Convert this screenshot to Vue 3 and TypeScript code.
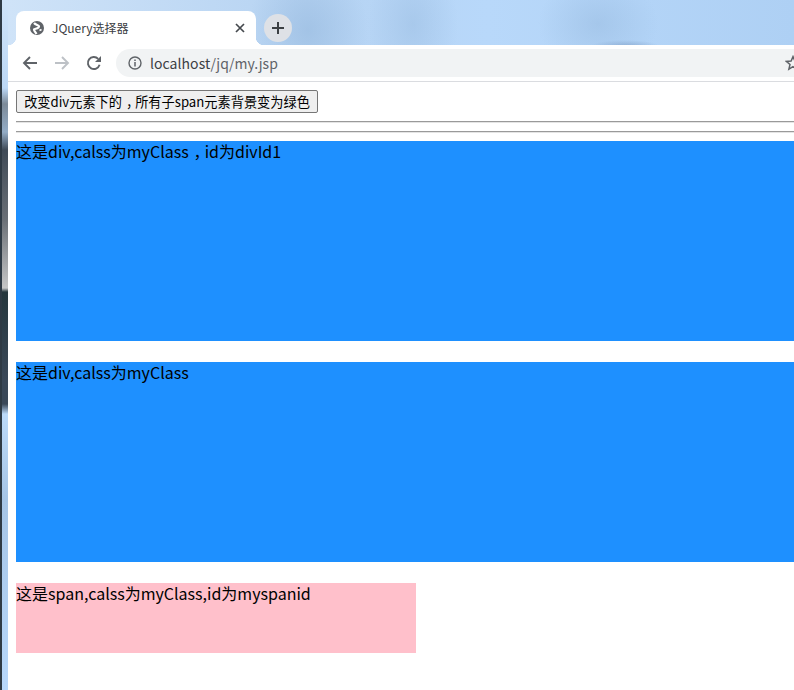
<template>
  <div class="screen">
    <div class="desktop-edge">
      <div class="edge-dark"></div>
      <div class="edge-light"></div>
    </div>
    <div class="browser">
      <div class="tabstrip">
        <div class="tab">
          <svg class="favicon" width="16" height="16" viewBox="0 0 16 16">
            <circle cx="8" cy="8" r="7" fill="#5f6368" />
            <path d="M5 3 C7 5.5 11.5 5 9.5 7.5 C7.5 9.5 3.5 8 5.5 11 C6.5 12.5 7 13 7.5 14" stroke="#fff" stroke-width="2.2" fill="none" />
            <path d="M10.5 10.5 12.5 9.5" stroke="#fff" stroke-width="1.6" fill="none" />
          </svg>
          <span class="tab-title">JQuery选择器</span>
          <svg class="tab-close" width="10" height="10" viewBox="0 0 10 10">
            <path d="M1 1 9 9M9 1 1 9" stroke="#45494e" stroke-width="1.7" fill="none" />
          </svg>
        </div>
        <div class="new-tab">
          <svg width="14" height="14" viewBox="0 0 14 14">
            <path d="M7 1V13M1 7H13" stroke="#3c4043" stroke-width="2" fill="none" />
          </svg>
        </div>
      </div>
      <div class="toolbar">
        <svg class="nav-icon" width="16" height="16" viewBox="0 0 16 16">
          <path d="M15 8H2M8 2 2 8 8 14" stroke="#5f6368" stroke-width="1.9" fill="none" />
        </svg>
        <svg class="nav-icon" width="16" height="16" viewBox="0 0 16 16">
          <path d="M1 8H14M8 2 14 8 8 14" stroke="#bdc1c6" stroke-width="1.9" fill="none" />
        </svg>
        <svg class="nav-icon" width="16" height="16" viewBox="0 0 16 16">
          <path d="M13.6 9.8A6 6 0 1 1 12.2 3.8" stroke="#5f6368" stroke-width="1.9" fill="none" />
          <path d="M15 1V7H9Z" fill="#5f6368" />
        </svg>
        <div class="omnibox">
          <svg class="info" width="14" height="14" viewBox="0 0 14 14">
            <circle cx="7" cy="7" r="6" stroke="#5f6368" stroke-width="1.4" fill="none" />
            <path d="M7 6V10.4M7 3.4V5" stroke="#5f6368" stroke-width="1.5" fill="none" />
          </svg>
          <span class="url"><span class="host">localhost</span>/jq/my.jsp</span>
          <svg class="star" width="16" height="16" viewBox="0 0 16 16">
            <path d="M8 1.6 9.9 6 14.6 6.4 11 9.5 12.1 14.1 8 11.7 3.9 14.1 5 9.5 1.4 6.4 6.1 6Z" stroke="#5f6368" stroke-width="1.5" fill="none" />
          </svg>
        </div>
      </div>
      <main class="page">
        <button class="change-btn" type="button">改变div元素下的<span class="punct">，</span>所有子span元素背景变为绿色</button>
        <hr />
        <hr />
        <div class="my-class">这是div,calss为myClass<span class="punct">，</span>id为divId1</div>
        <div class="my-class">这是div,calss为myClass</div>
        <span class="my-span">这是span,calss为myClass,id为myspanid</span>
      </main>
    </div>
  </div>
</template>

<script setup lang="ts">
</script>

<style>
html,
body {
  margin: 0;
  overflow: hidden;
  background: #fff;
}
</style>

<style scoped>
.screen {
  display: flex;
  width: 794px;
  height: 690px;
  overflow: hidden;
  font-family: "Noto Sans CJK SC", "Liberation Sans", sans-serif;
}

.desktop-edge {
  display: flex;
  flex: none;
  width: 8px;
}

.edge-dark {
  width: 2px;
  background: #2f3a44;
}

.edge-light {
  flex: 1;
  background: linear-gradient(
    #cfe3f8 0,
    #bcd8f6 88px,
    #7c8a98 104px,
    #93acc6 132px,
    #3f4a56 150px,
    #6b7076 220px,
    #c6c6c6 288px,
    #26373d 292px,
    #3a4858 380px,
    #3a4858 404px,
    #bcdaf9 414px,
    #a6c5e6 500px,
    #b8d8fb 690px
  );
}

.browser {
  display: flex;
  flex: 1;
  flex-direction: column;
  min-width: 0;
}

.tabstrip {
  display: flex;
  align-items: flex-end;
  flex: none;
  height: 45px;
  padding-left: 8px;
  background:
    radial-gradient(ellipse 60px 70px at 300px 30px, rgba(150, 185, 222, 0.6), transparent),
    radial-gradient(ellipse 45px 70px at 405px 24px, rgba(150, 185, 222, 0.45), transparent),
    radial-gradient(ellipse 60px 50px at 590px 24px, rgba(150, 185, 222, 0.5), transparent),
    radial-gradient(ellipse 34px 6px at 617px 46px, rgba(120, 150, 190, 0.6), transparent),
    linear-gradient(90deg, #cfe3f8 0, #b6d3f2 300px, #b8d8fa 480px, #aed0f4 786px);
}

.tab {
  position: relative;
  display: flex;
  align-items: center;
  box-sizing: border-box;
  width: 240px;
  height: 34px;
  padding: 0 11px 0 13px;
  border-radius: 8px 8px 0 0;
  background: #fff;
}

.tab::before,
.tab::after {
  content: "";
  position: absolute;
  bottom: 0;
  width: 8px;
  height: 8px;
}

.tab::before {
  left: -8px;
  background: radial-gradient(circle at 0 0, transparent 8px, #fff 8.5px);
}

.tab::after {
  right: -8px;
  background: radial-gradient(circle at 100% 0, transparent 8px, #fff 8.5px);
}

.favicon {
  flex: none;
}

.tab-title {
  flex: 1;
  margin-left: 7px;
  color: #3c4043;
  font-size: 12px;
  line-height: 34px;
}

.new-tab {
  display: flex;
  align-items: center;
  justify-content: center;
  width: 28px;
  height: 28px;
  margin: 0 0 3px 8px;
  border-radius: 50%;
  background: #dee1e6;
}

.toolbar {
  display: flex;
  align-items: center;
  flex: none;
  box-sizing: border-box;
  height: 37px;
  padding: 0 0 0 14px;
  border-bottom: 1px solid #dadce0;
  background: #fff;
}

.nav-icon {
  flex: none;
  margin-right: 16px;
}

.omnibox {
  display: flex;
  align-items: center;
  flex: 1;
  height: 28px;
  margin-left: -2px;
  padding-left: 12px;
  border-radius: 14px 0 0 14px;
  background: #f1f3f4;
}

.info {
  flex: none;
}

.url {
  flex: 1;
  margin-left: 8px;
  color: #5f6368;
  font-size: 14px;
  letter-spacing: 0.05px;
}

.host {
  color: #3c4043;
}

.star {
  flex: none;
  margin-right: -7px;
}

.page {
  flex: 1;
  padding: 8px 0 0 8px;
  color: #000;
  font-size: 16px;
  line-height: 21px;
  background: #fff;
}

.punct {
  padding: 0 0.2em 0 0.3em;
  font-feature-settings: "halt";
}

.change-btn {
  display: block;
  box-sizing: border-box;
  width: 302px;
  height: 23px;
  padding: 0;
  border: 1px solid #767676;
  border-radius: 2px;
  color: #000;
  font-family: inherit;
  font-size: 13.2px;
  line-height: 21px;
  white-space: nowrap;
  background: #efefef;
}

hr {
  height: 0;
  margin: 8px 0;
  border: none;
  border-top: 1px solid #9a9a9a;
  border-bottom: 1px solid #e4e4e4;
}

.my-class {
  width: 800px;
  height: 200px;
  margin-bottom: 21px;
  background: #1e90ff;
}

.my-span {
  display: block;
  width: 400px;
  height: 70px;
  background: #ffc0cb;
}
</style>
